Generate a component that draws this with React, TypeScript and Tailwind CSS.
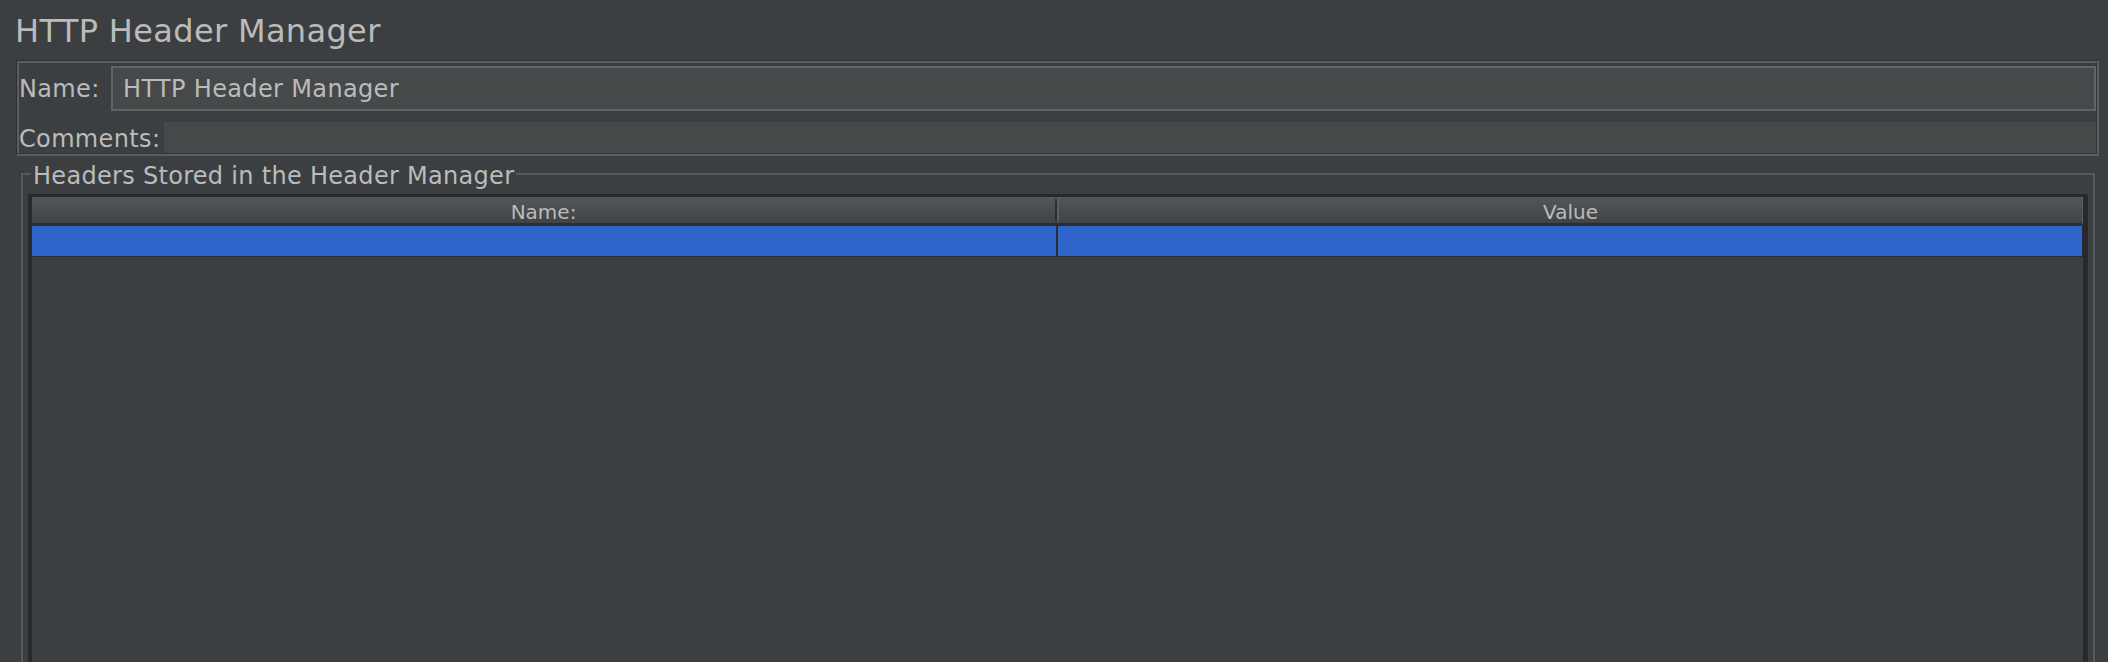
// HTTP Header Manager — JMeter (Darcula) 설정 화면 재현

const FONT = "font-['DejaVu_Sans',sans-serif]";

// Name / Comments 입력 패널 (etched border)
function NamePanel() {
  return (
    <div className="ml-[16px] mr-[9px] border-l border-t border-r-2 border-b-2 border-l-[#2d2f31] border-t-[#2d2f31] border-r-[#5b5e60] border-b-[#5b5e60]">
      <div className="flex flex-col border-l-2 border-t-2 border-r border-b border-l-[#5b5e60] border-t-[#5b5e60] border-r-[#34373a] border-b-[#34373a]">
        <div className="mt-[3px] flex h-[45px] items-center">
          <span className="w-[92px] shrink-0 text-[24px] leading-[28px] tracking-[0.35px]">Name:</span>
          <div className="flex h-full flex-1 items-center border-2 border-[#616466] bg-[#45494a] pl-[10px] text-[24px] leading-[28px] tracking-[0.35px]">
            HTTP Header Manager
          </div>
        </div>
        <div className="mt-[11px] flex h-[31px] items-start">
          <span className="w-[145px] shrink-0 pt-[3px] text-[24px] leading-[28px] tracking-[0.35px]">Comments:</span>
          <div className="h-full flex-1 bg-[#45494a]" />
        </div>
      </div>
    </div>
  );
}

// 헤더 테이블 (Name: / Value)
function HeaderTable() {
  return (
    <div className="mx-[5px] mt-[4px] h-[520px] border-l-4 border-t-[3px] border-r-[5px] border-[#28292a]">
      {/* 컬럼 헤더 */}
      <div className="flex h-[29px] border-b-[3px] border-r border-b-[#2b2d2e] border-r-[#5a5d5f] bg-gradient-to-b from-[#53575a] to-[#3f4345]">
        <div className="w-[1023px] pt-[5px] text-center text-[20px] leading-[20px]">Name:</div>
        <div className="my-[2px] flex w-[4px]">
          <div className="w-[2px] bg-[#2b2d2e]" />
          <div className="w-[2px] bg-[#5b5f61]" />
        </div>
        <div className="flex-1 pt-[5px] text-center text-[20px] leading-[20px]">Value</div>
      </div>
      {/* 선택된 빈 행 */}
      <div className="flex h-[31px] border-b border-[#2b2d2e]">
        <div className="w-[1024px] bg-[#2f65ca]" />
        <div className="w-[2px] bg-[#2b2d2e]" />
        <div className="flex-1 bg-[#2f65ca]" />
        <div className="w-[1px] bg-[#2b2d2e]" />
      </div>
    </div>
  );
}

export default function App() {
  return (
    <div className={`flex h-[662px] w-[2108px] flex-col overflow-hidden bg-[#3c3f41] text-[#bbbbbb] ${FONT}`}>
      <h1 className="ml-[15px] mt-[12px] mb-[10px] text-[32px] leading-[38px] font-normal tracking-[0.35px]">
        HTTP Header Manager
      </h1>

      <NamePanel />

      <fieldset className="ml-[21px] mr-[13px] mt-[2px] border-2 border-[#56595b]">
        <legend className="ml-[8px] px-[2px] pt-[4px] text-[24px] leading-[28px] tracking-[0.3px]">
          Headers Stored in the Header Manager
        </legend>
        <HeaderTable />
      </fieldset>
    </div>
  );
}
